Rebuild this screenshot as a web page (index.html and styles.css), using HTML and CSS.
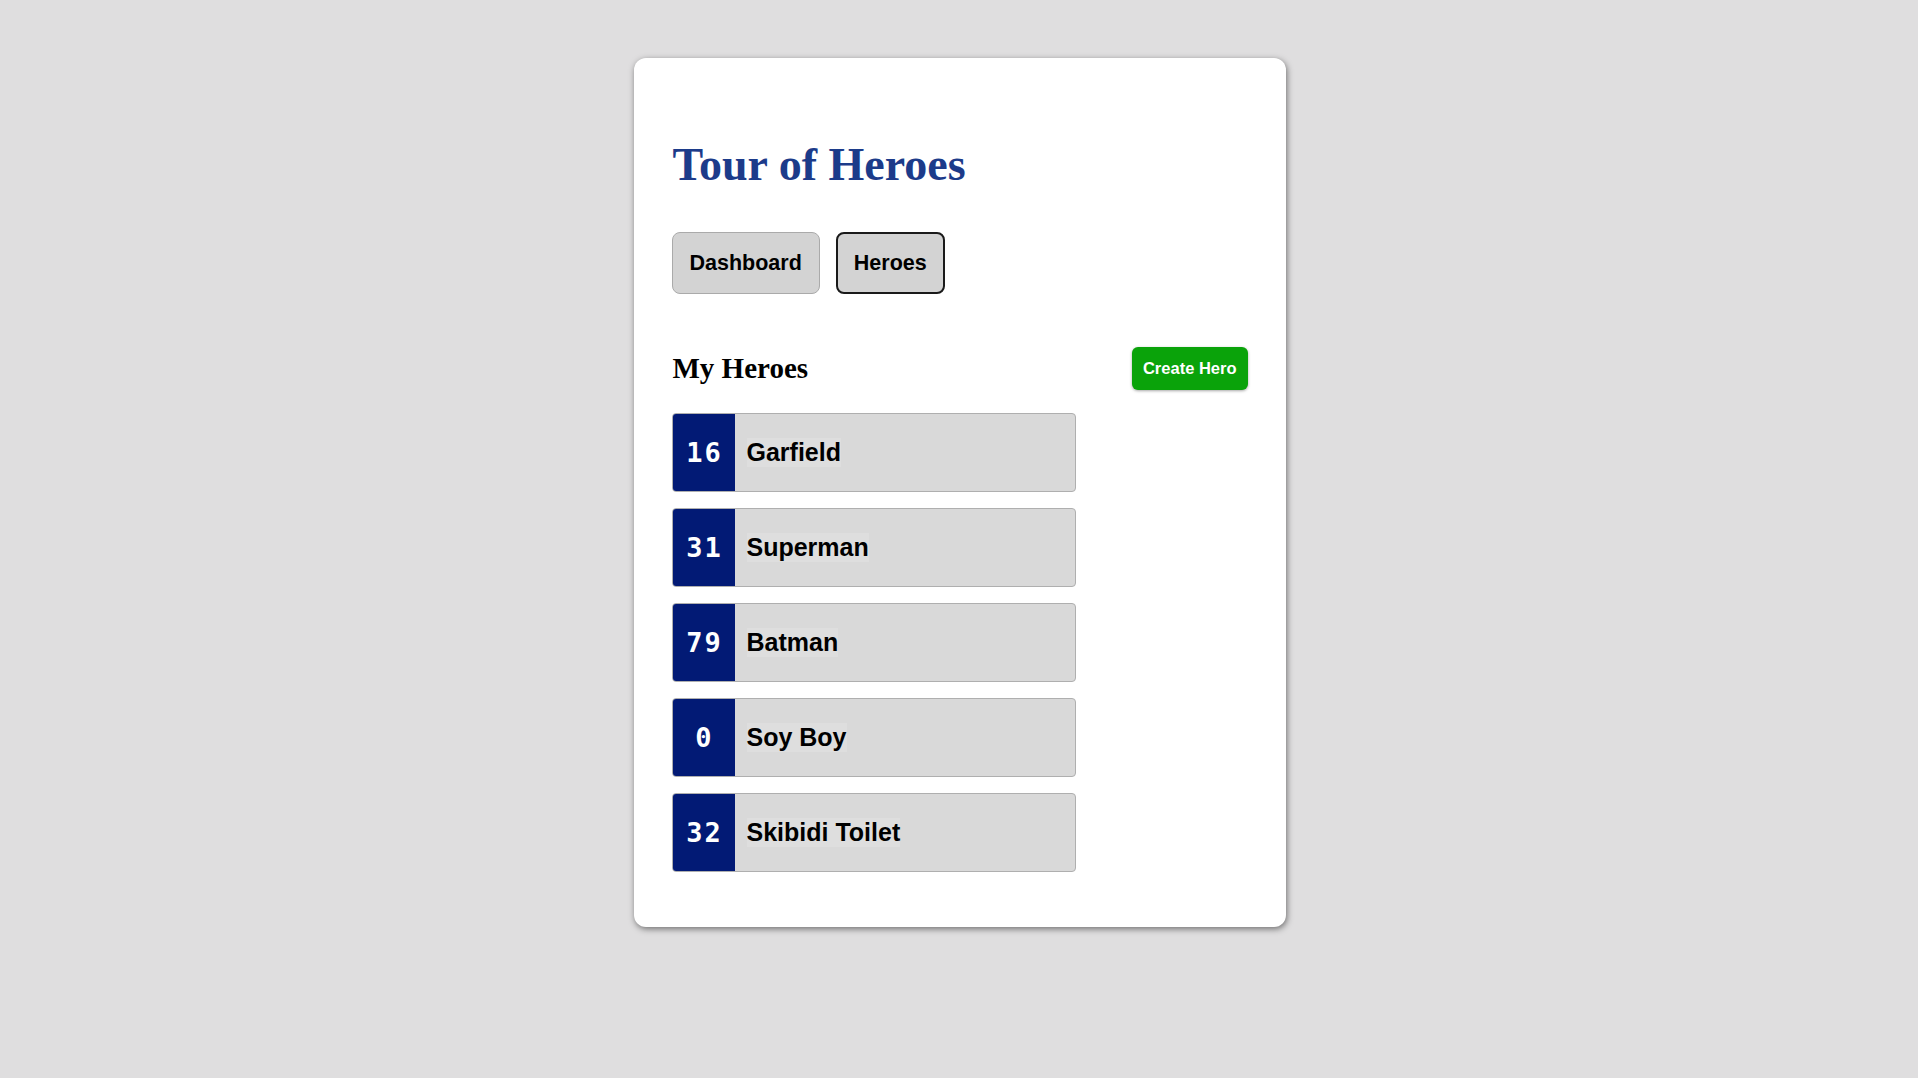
FILE: index.html
```html
<!DOCTYPE html>
<html lang="en">
<head>
    <meta charset="UTF-8">
    <title>Tour of Heroes</title>
    <link rel="stylesheet" href="styles.css">
</head>
<body>
<div class="app">
    <h1 class="title">Tour of Heroes</h1>
    <nav class="nav">
        <a class="nav-btn" href="#">Dashboard</a>
        <a class="nav-btn active" href="#">Heroes</a>
    </nav>
    <div class="heroes-head">
        <h2>My Heroes</h2>
        <button class="create-btn">Create Hero</button>
    </div>
    <ul class="heroes">
        <li class="hero"><span class="badge">16</span><span class="name">Garfield</span></li>
        <li class="hero"><span class="badge">31</span><span class="name">Superman</span></li>
        <li class="hero"><span class="badge">79</span><span class="name">Batman</span></li>
        <li class="hero"><span class="badge">0</span><span class="name">Soy Boy</span></li>
        <li class="hero"><span class="badge">32</span><span class="name">Skibidi Toilet</span></li>
    </ul>
</div>
</body>
</html>
```

FILE: styles.css
```css
*{
    margin: 0;
    padding: 0;
    box-sizing: border-box;
}
html,body {
    height: 100%;
}
body{
    background-color: #dfdedf;
    font-family: "Liberation Sans", Arial, sans-serif;
    padding: 58px 0 0 1px;
}
.app{
    width: 652px;
    margin: 0 auto;
    padding: 81px 38px 55px;
    background-color: #ffffff;
    border-radius: 12px;
    box-shadow: 1px 2px 6px rgba(0,0,0,0.5);
}
.title{
    font-family: "Liberation Serif", "Times New Roman", serif;
    font-size: 46px;
    line-height: 52px;
    font-weight: bold;
    color: #1c3b8a;
    margin-left: 1px;
}
.nav{
    display: flex;
    gap: 16px;
    margin-top: 41px;
}
.nav-btn{
    display: block;
    font-size: 21.5px;
    line-height: 24px;
    font-weight: bold;
    color: #000000;
    text-decoration: none;
    background-color: #d3d3d3;
    border: 1px solid #aaaaaa;
    border-radius: 8px;
    padding: 18px 17px;
}
.nav-btn.active{
    border: 2px solid #1a1a1a;
    padding: 17px 16px;
}
.heroes-head{
    display: flex;
    align-items: center;
    justify-content: space-between;
    margin-top: 53px;
}
.heroes-head h2{
    font-family: "Liberation Serif", "Times New Roman", serif;
    font-size: 29px;
    font-weight: bold;
    color: #000000;
    margin-left: 1px;
}
.create-btn{
    font-family: "Liberation Sans", Arial, sans-serif;
    font-size: 16.5px;
    line-height: 19px;
    font-weight: bold;
    color: #ffffff;
    background-color: #0aa30a;
    border: none;
    border-radius: 6px;
    padding: 12px 11px;
    box-shadow: 0 1px 3px rgba(0,0,0,0.35);
}
.heroes{
    list-style: none;
    display: flex;
    flex-direction: column;
    gap: 16px;
    margin-top: 23px;
}
.hero{
    display: flex;
    align-items: center;
    width: 404px;
    height: 79px;
    background-color: #d9d9d9;
    border: 1px solid #afafaf;
    border-radius: 4px;
    overflow: hidden;
}
.badge{
    align-self: stretch;
    width: 62px;
    display: flex;
    align-items: center;
    justify-content: center;
    padding-left: 2px;
    background-color: #021a75;
    color: #ffffff;
    font-family: "DejaVu Sans Mono", monospace;
    font-size: 27px;
    font-weight: bold;
    letter-spacing: 2px;
}
.name{
    margin-left: 12px;
    font-size: 25px;
    font-weight: bold;
    color: #000000;
    background-color: #dedede;
}
```
